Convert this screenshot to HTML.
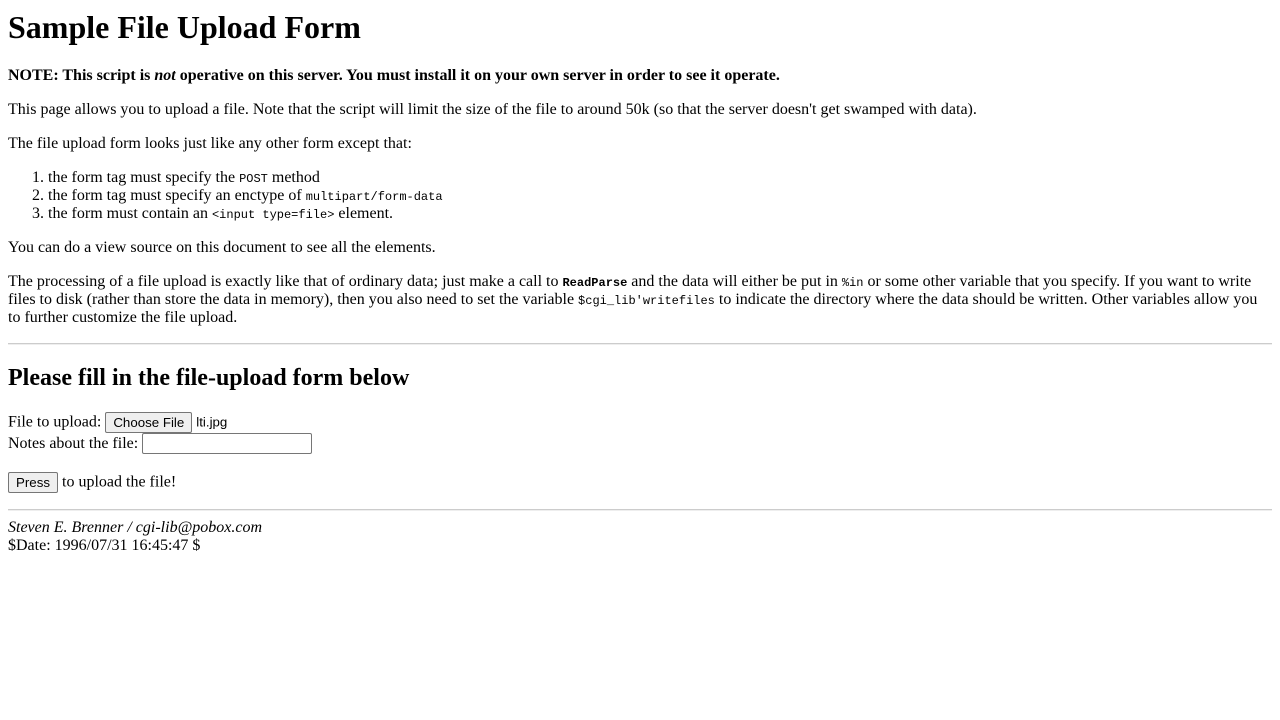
<!DOCTYPE html>
<html><head><meta charset="utf-8"><style>
body{margin:8px;font-family:"Liberation Serif",serif;font-size:16px;color:#000;background:#fff}
h1{font-size:32px;margin:9px 0 21px}
h2{font-size:24px;margin:20px 0}
p{margin:16px 0}
code,tt{font-family:"Liberation Mono",monospace;font-size:12px}
ol{margin:16px 0;padding-left:40px}
hr{border:0;border-top:1px solid #ccc;border-bottom:1px solid #eee;margin:8px 0}
.btn{font-family:"Liberation Sans",sans-serif;font-size:13.3px;padding:1px 7px 2px;border:1px solid #767676;border-radius:2px;background:#efefef;color:#000;height:21px;vertical-align:baseline}
.inp{width:164px;height:17px;border:1px solid #767676;border-radius:2px;padding:1px 2px;vertical-align:baseline}
.fn{font-family:"Liberation Sans",sans-serif;font-size:13.3px}
</style></head><body>
<h1>Sample File Upload Form</h1>
<p><b>NOTE: This script is <i>not</i> operative on this server. You must install it on your own server in order to see it operate.</b></p>
<p>This page allows you to upload a file. Note that the script will limit the size of the file to around 50k (so that the server doesn't get swamped with data).</p>
<p>The file upload form looks just like any other form except that:</p>
<ol>
<li>the form tag must specify the <code>POST</code> method</li>
<li>the form tag must specify an enctype of <code>multipart/form-data</code></li>
<li>the form must contain an <code>&lt;input type=file&gt;</code> element.</li>
</ol>
<p>You can do a view source on this document to see all the elements.</p>
<p>The processing of a file upload is exactly like that of ordinary data; just make a call to <code><b>ReadParse</b></code> and the data will either be put in <code>%in</code> or some other variable that you specify. If you want to write files to disk (rather than store the data in memory), then you also need to set the variable <code>$cgi_lib'writefiles</code> to indicate the directory where the data should be written. Other variables allow you<br>to further customize the file upload.</p>
<hr>
<h2>Please fill in the file-upload form below</h2>
<div>File to upload: <button class="btn">Choose File</button> <span class="fn">lti.jpg</span><br>
Notes about the file: <input class="inp" type="text"><br>
<p style="margin:18px 0 16px">
<button class="btn">Press</button> to upload the file!</p></div>
<hr>
<i>Steven E. Brenner / cgi-lib@pobox.com</i><br>
$Date: 1996/07/31 16:45:47 $
</body></html>
